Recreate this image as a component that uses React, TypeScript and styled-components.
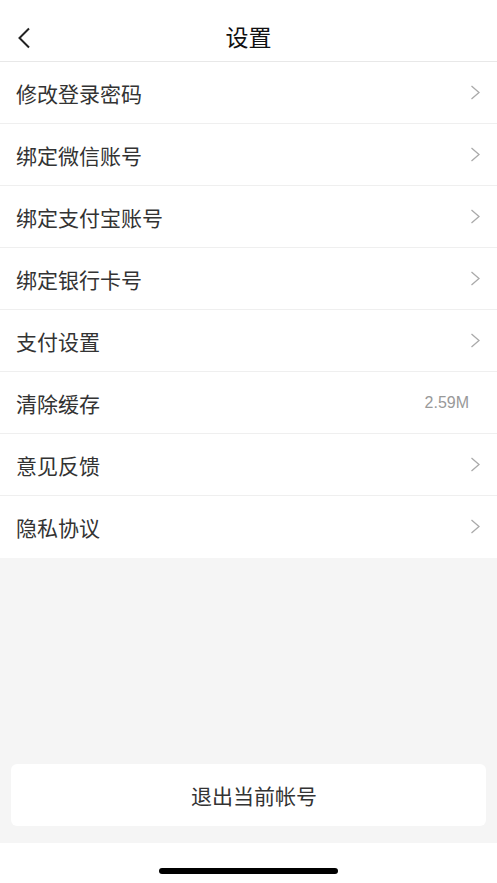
import React from "react";
import styled, { createGlobalStyle } from "styled-components";

const GlobalStyle = createGlobalStyle`
  html, body {
    margin: 0;
    padding: 0;
    background: #ffffff;
  }
  body {
    font-family: "Noto Sans CJK SC", "Noto Sans", sans-serif;
    -webkit-font-smoothing: antialiased;
  }
`;

const Page = styled.div`
  display: flex;
  flex-direction: column;
  width: 497px;
  height: 883px;
  background: #f5f5f5;
`;

const Header = styled.header`
  position: relative;
  display: flex;
  align-items: center;
  justify-content: center;
  height: 51px;
  padding-top: 10px;
  background: #fff;
  border-bottom: 1px solid #e8e8e8;
  flex-shrink: 0;
`;

const BackButton = styled.button`
  position: absolute;
  left: 12px;
  top: 23px;
  display: flex;
  align-items: center;
  justify-content: center;
  width: 24px;
  height: 30px;
  padding: 0;
  border: none;
  background: none;
`;

const Title = styled.h1`
  margin: 0;
  font-size: 23px;
  font-weight: 400;
  color: #111;
`;

const List = styled.ul`
  margin: 0;
  padding: 0;
  list-style: none;
  background: #fff;
  flex-shrink: 0;
`;

const Row = styled.li<{ $last?: boolean }>`
  display: flex;
  align-items: center;
  justify-content: space-between;
  height: 61px;
  padding: 0 16px;
  border-bottom: 1px solid ${(p) => (p.$last ? "#fff" : "#efefef")};
`;

const Label = styled.span`
  font-size: 21px;
  color: #333;
`;

const Value = styled.span`
  font-size: 16px;
  color: #999;
  font-family: "Liberation Sans", Arial, sans-serif;
  margin-right: 12px;
`;

const Filler = styled.div`
  flex: 1;
  display: flex;
  flex-direction: column;
  justify-content: flex-end;
  padding: 0 11px 17px;
`;

const LogoutButton = styled.button`
  height: 62px;
  padding: 0 0 0 11px;
  border: none;
  border-radius: 6px;
  background: #fff;
  font-family: inherit;
  font-size: 21px;
  color: #333;
`;

const HomeArea = styled.div`
  display: flex;
  justify-content: center;
  height: 40px;
  padding-top: 25px;
  box-sizing: border-box;
  background: #fff;
  flex-shrink: 0;
`;

const HomeIndicator = styled.div`
  width: 179px;
  height: 6px;
  border-radius: 3px;
  background: #000;
`;

const Chevron = () => (
  <svg width="11" height="15" viewBox="0 0 11 15" fill="none">
    <path d="M1.5 1 L9 7.5 L1.5 14" stroke="#aaa" strokeWidth="1.3" />
  </svg>
);

const BackIcon = () => (
  <svg width="16" height="22" viewBox="0 0 16 22" fill="none">
    <path d="M13 1.5 L3.5 11 L13 20.5" stroke="#222" strokeWidth="2" />
  </svg>
);

const items: { label: string; value?: string }[] = [
  { label: "修改登录密码" },
  { label: "绑定微信账号" },
  { label: "绑定支付宝账号" },
  { label: "绑定银行卡号" },
  { label: "支付设置" },
  { label: "清除缓存", value: "2.59M" },
  { label: "意见反馈" },
  { label: "隐私协议" },
];

export default function App() {
  return (
    <>
      <GlobalStyle />
      <Page>
        <Header>
          <BackButton>
            <BackIcon />
          </BackButton>
          <Title>设置</Title>
        </Header>
        <List>
          {items.map((item, i) => (
            <Row key={item.label} $last={i === items.length - 1}>
              <Label>{item.label}</Label>
              {item.value ? <Value>{item.value}</Value> : <Chevron />}
            </Row>
          ))}
        </List>
        <Filler>
          <LogoutButton>退出当前帐号</LogoutButton>
        </Filler>
        <HomeArea>
          <HomeIndicator />
        </HomeArea>
      </Page>
    </>
  );
}
